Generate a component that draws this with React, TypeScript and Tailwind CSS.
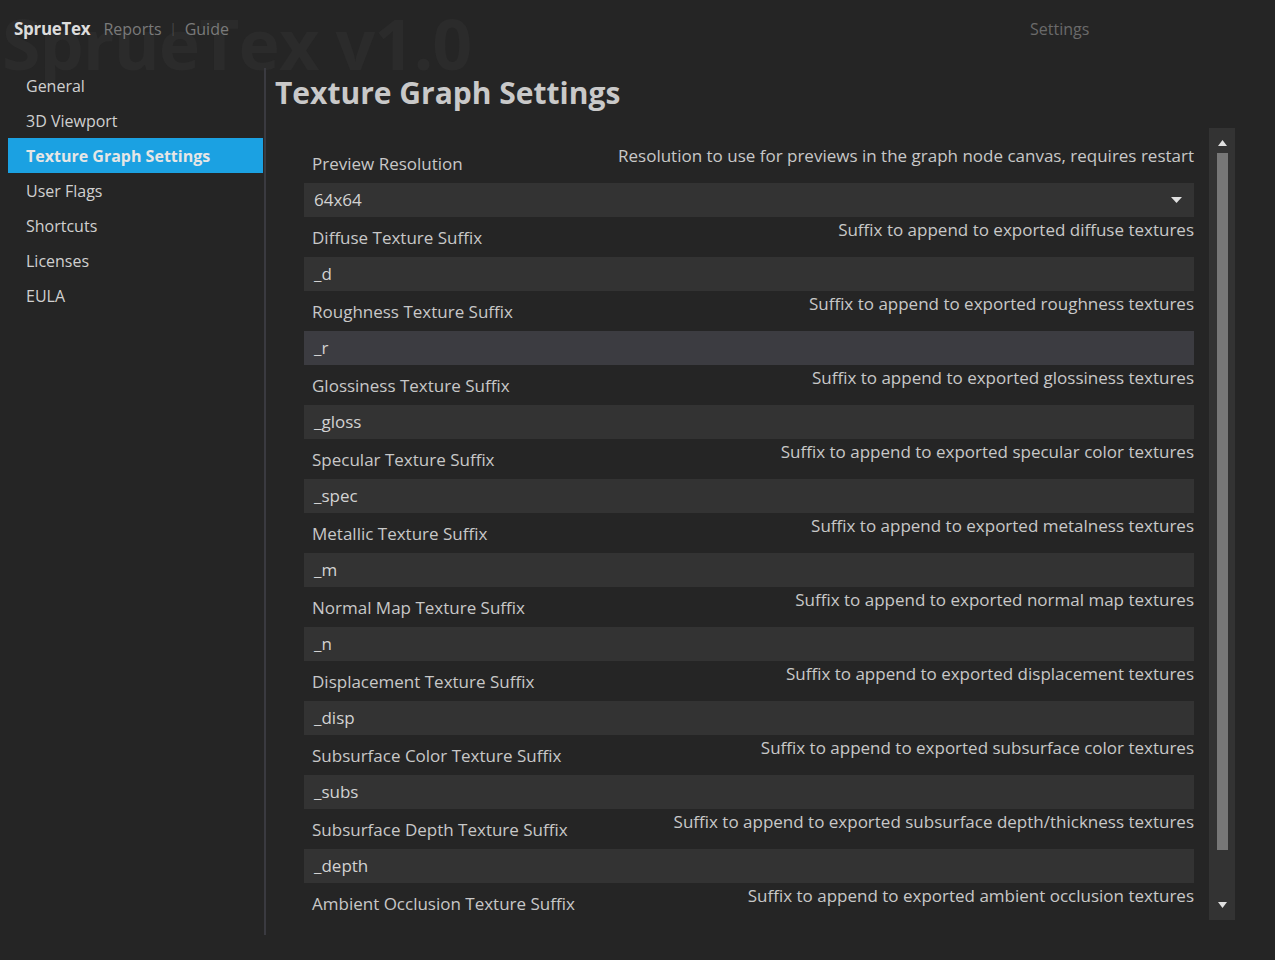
const navItems = ['General', '3D Viewport', 'Texture Graph Settings', 'User Flags', 'Shortcuts', 'Licenses', 'EULA'];

const settings = [
  { label: 'Preview Resolution', desc: 'Resolution to use for previews in the graph node canvas, requires restart', value: '64x64', dropdown: true },
  { label: 'Diffuse Texture Suffix', desc: 'Suffix to append to exported diffuse textures', value: '_d' },
  { label: 'Roughness Texture Suffix', desc: 'Suffix to append to exported roughness textures', value: '_r', hover: true },
  { label: 'Glossiness Texture Suffix', desc: 'Suffix to append to exported glossiness textures', value: '_gloss' },
  { label: 'Specular Texture Suffix', desc: 'Suffix to append to exported specular color textures', value: '_spec' },
  { label: 'Metallic Texture Suffix', desc: 'Suffix to append to exported metalness textures', value: '_m' },
  { label: 'Normal Map Texture Suffix', desc: 'Suffix to append to exported normal map textures', value: '_n' },
  { label: 'Displacement Texture Suffix', desc: 'Suffix to append to exported displacement textures', value: '_disp' },
  { label: 'Subsurface Color Texture Suffix', desc: 'Suffix to append to exported subsurface color textures', value: '_subs' },
  { label: 'Subsurface Depth Texture Suffix', desc: 'Suffix to append to exported subsurface depth/thickness textures', value: '_depth' },
  { label: 'Ambient Occlusion Texture Suffix', desc: 'Suffix to append to exported ambient occlusion textures' },
];

export default function App() {
  return (
    <div
      className="relative w-[1275px] h-[960px] overflow-hidden bg-[#252525] text-[#cfcfcf]"
      style={{ fontFamily: '"Open Sans", "Noto Sans", sans-serif' }}
    >
      {/* faded watermark */}
      <div className="absolute left-[2px] top-[8px] text-[70px] font-bold leading-none text-[#2b2b2b] select-none whitespace-nowrap tracking-[-1px]">
        SprueTex v1.0
      </div>

      {/* top bar */}
      <div className="relative flex items-center h-[58px] pl-[14px]">
        <span className="text-[17px] font-bold text-[#dcdcdc] tracking-[-0.3px]">SprueTex</span>
        <span className="ml-[13px] text-[16px] text-[#7a7a7a]">Reports</span>
        <span className="mx-[8px] text-[13px] text-[#4a4a4a]">|</span>
        <span className="text-[16px] text-[#7a7a7a]">Guide</span>
        <span className="absolute left-[1030px] text-[16px] text-[#6a6a6a]">Settings</span>
      </div>

      <div className="relative flex mt-[10px]">
        {/* sidebar */}
        <div className="w-[266px] pl-[8px] border-r-2 border-[#3a3a40] h-[867px]">
          {navItems.map(item => (
            <div
              key={item}
              className={`w-[255px] h-[35px] flex items-center pl-[18px] text-[16px] ${
                item === 'Texture Graph Settings' ? 'bg-[#1ba1e2] font-bold text-[#e6e6e6]' : 'text-[#d0d0d0]'
              }`}
            >
              {item}
            </div>
          ))}
        </div>

        {/* main */}
        <div className="flex-1 pl-[9px]">
          <h1 className="text-[30px] font-bold text-[#c9c9c9] leading-[50px]">Texture Graph Settings</h1>
          <div className="flex mt-[10px]">
            <div className="w-[934px] pl-[29px] pr-[15px] pt-[15px]">
              {settings.map(s => (
                <div key={s.label}>
                  <div className="flex justify-between h-[40px]">
                    <span className="pt-[9px] pl-[8px] text-[17px] leading-[24px] text-[#c8c8c8]">{s.label}</span>
                    <span className="pt-[1px] text-[17px] leading-[24px] text-[#c8c8c8]">{s.desc}</span>
                  </div>
                  {s.value && (
                    <div
                      className={`h-[34px] flex items-center justify-between pl-[10px] pr-[12px] text-[17px] text-[#d2d2d2] ${
                        s.hover ? 'bg-[#3c3c41]' : 'bg-[#333333]'
                      }`}
                    >
                      <span>{s.value}</span>
                      {s.dropdown && (
                        <svg width="11" height="6" viewBox="0 0 11 6">
                          <path d="M0 0 H11 L5.5 6 Z" fill="#e0e0e0" />
                        </svg>
                      )}
                    </div>
                  )}
                </div>
              ))}
            </div>

            {/* scrollbar */}
            <div className="w-[26px] h-[792px] bg-[#333333] flex flex-col items-center">
              <svg className="mt-[12px]" width="9" height="6" viewBox="0 0 9 6">
                <path d="M0 6 H9 L4.5 0 Z" fill="#e0e0e0" />
              </svg>
              <div className="w-[11px] flex-1 mt-[7px] mb-[52px] bg-[#777777]" />
              <svg className="mb-[12px]" width="9" height="6" viewBox="0 0 9 6">
                <path d="M0 0 H9 L4.5 6 Z" fill="#e0e0e0" />
              </svg>
            </div>
          </div>
        </div>
      </div>
    </div>
  );
}
